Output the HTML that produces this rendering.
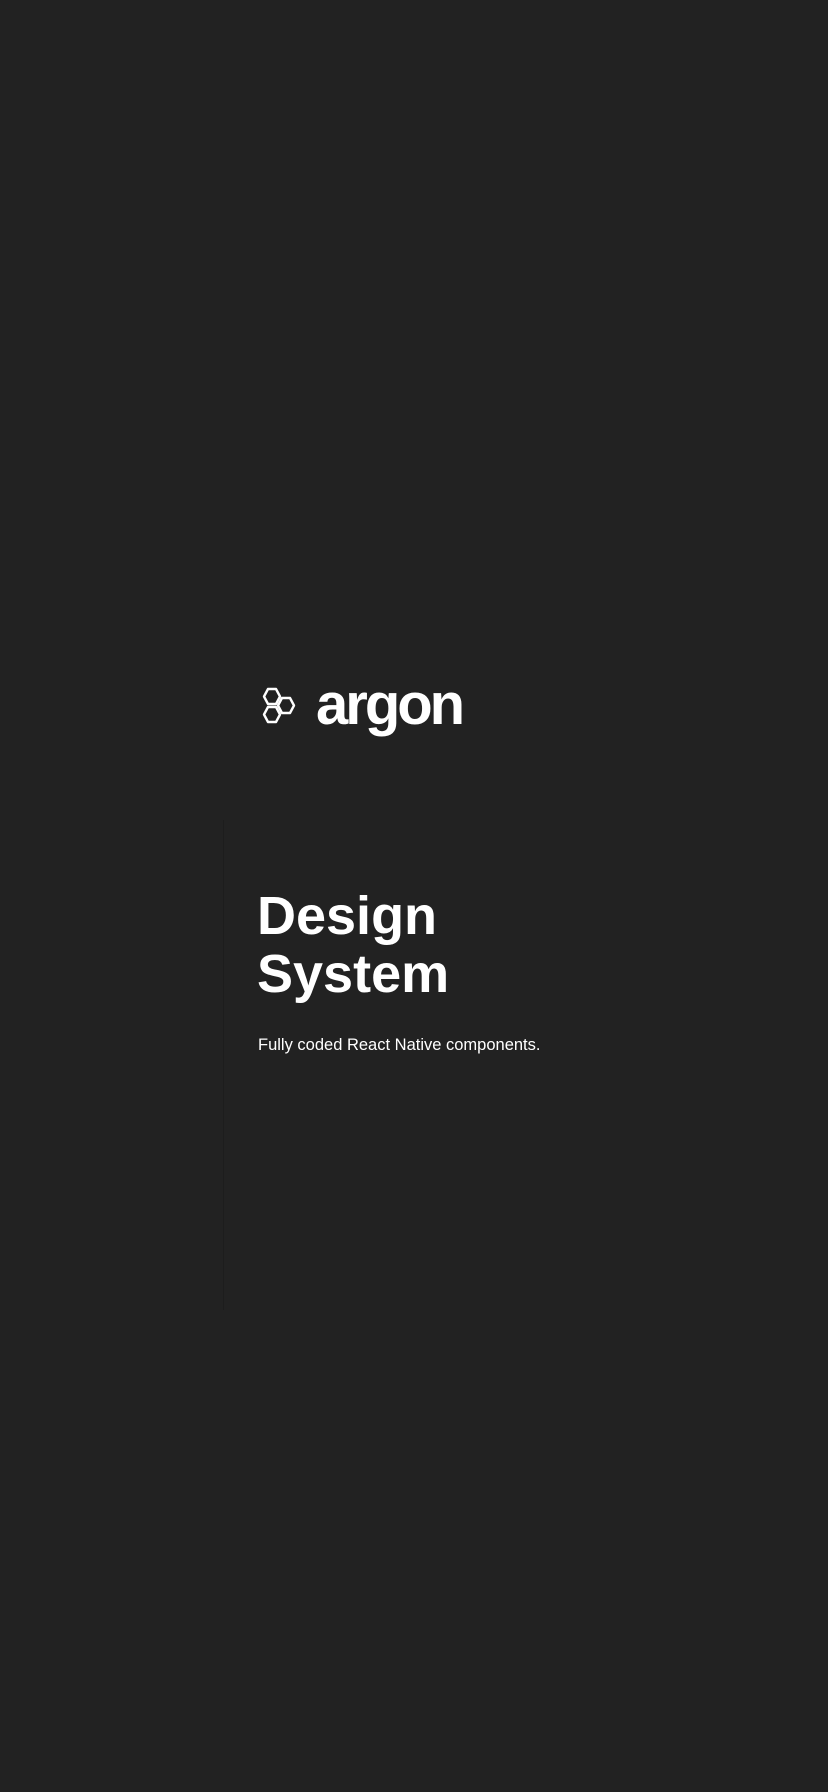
<!DOCTYPE html>
<html><head><meta charset="utf-8"><style>
html,body{margin:0;padding:0;background:#222222;width:828px;height:1792px;overflow:hidden;position:relative;font-family:"Liberation Sans",sans-serif;color:#fff}
.abs{position:absolute;white-space:nowrap}
</style></head><body>
<div class="abs" style="left:223px;top:820px;width:1px;height:490px;background:#1d1d1d"></div>
<svg class="abs" style="left:261px;top:687px" width="42" height="40" viewBox="0 0 42 40">
<g fill="none" stroke="#fff" stroke-width="2.4" stroke-linejoin="round">
<polygon points="7,2 15,2 19,9.5 15,17 7,17 3,9.5"/>
<polygon points="7,20 15,20 19,27.5 15,35 7,35 3,27.5"/>
<polygon points="21,11 29,11 33,18.5 29,26 21,26 17,18.5"/>
</g></svg>
<div class="abs" style="left:316px;top:670px;font-size:58px;font-weight:bold;letter-spacing:-3px;line-height:70px">argon</div>
<div class="abs" style="left:257px;top:887px;font-size:54px;font-weight:bold;line-height:58px">Design<br>System</div>
<div class="abs" style="left:258px;top:1034px;font-size:16.5px;line-height:22px">Fully coded React Native components.</div>
</body></html>
